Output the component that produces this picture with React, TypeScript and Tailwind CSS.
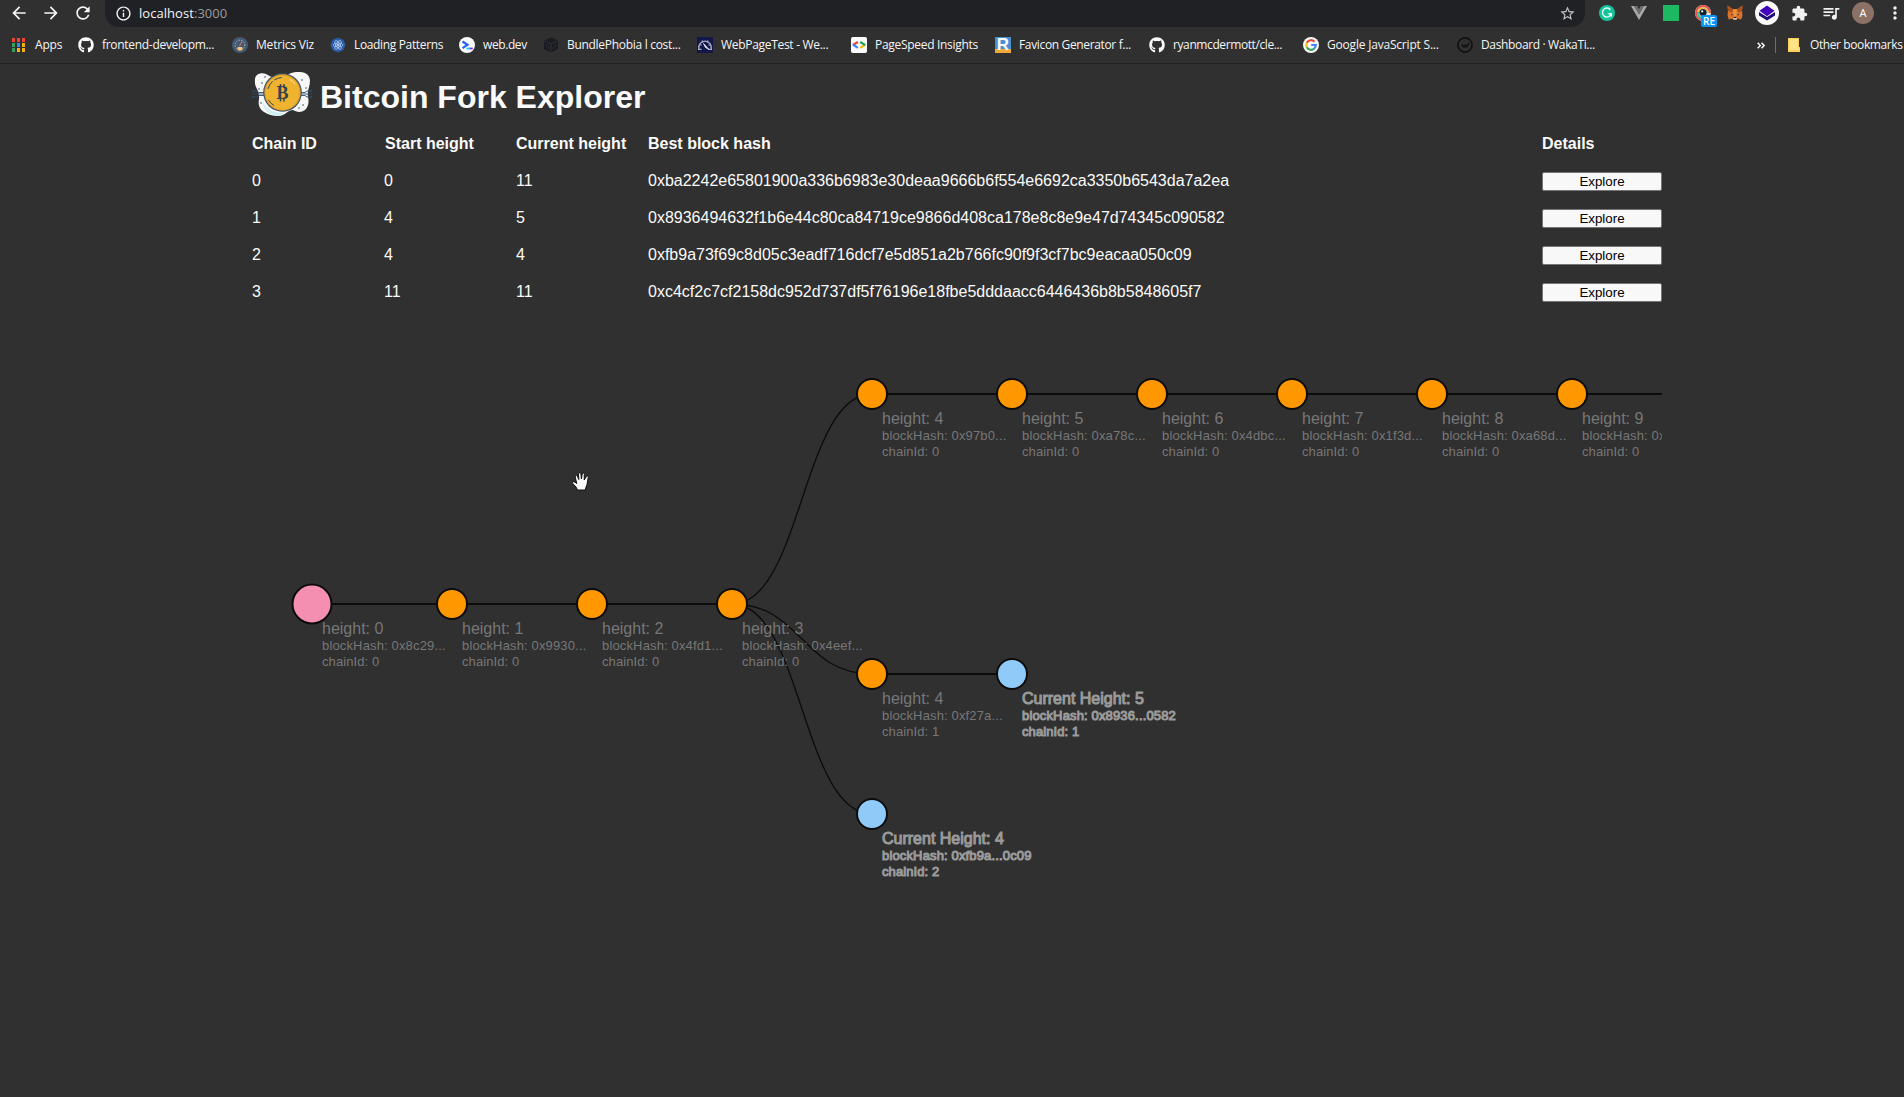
import React from "react";
import { FaGithub } from "react-icons/fa";
import {
  MdArrowBack,
  MdArrowForward,
  MdRefresh,
  MdInfoOutline,
  MdStarBorder,
  MdExtension,
  MdQueueMusic,
  MdMoreVert,
} from "react-icons/md";

const AppsIcon = () => (
  <svg width="16" height="16" viewBox="0 0 16 16" shapeRendering="crispEdges">
    {["#f44336", "#f44336", "#f44336", "#34a05a", "#2196f3", "#fbb016", "#34a05a", "#fbb016", "#fbb016"].map((c, i) => (
      <rect key={i} x={1 + (i % 3) * 5} y={1 + Math.floor(i / 3) * 5} width="3" height="4" fill={c} />
    ))}
  </svg>
);

const GithubIcon = () => <FaGithub size={16} color="#fafafa" />;

const MetricsIcon = () => (
  <svg width="16" height="16" viewBox="0 0 16 16">
    <circle cx="8" cy="8" r="8" fill="#455a71" />
    <circle cx="8" cy="8" r="4.800" fill="none" stroke="#c9d1d9" strokeWidth="1" strokeDasharray="1 1.600" />
    <path d="M7.500 9 10 4.500" stroke="#e57368" strokeWidth="1" />
    <rect x="5.500" y="10" width="5" height="3.400" rx="0.800" fill="#f6c37c" />
  </svg>
);

const ReactPatternsIcon = () => (
  <svg width="16" height="16" viewBox="0 0 16 16">
    <path d="M8 .5 13.500 3 15.500 8 13.500 13 8 15.500 2.500 13 .5 8 2.500 3z" fill="#2a5ba8" />
    <g fill="none" stroke="#a9c8f0" strokeWidth="0.8">
      <ellipse cx="8" cy="8" rx="5" ry="2" />
      <ellipse cx="8" cy="8" rx="5" ry="2" transform="rotate(60 8 8)" />
      <ellipse cx="8" cy="8" rx="5" ry="2" transform="rotate(120 8 8)" />
    </g>
    <circle cx="8" cy="8" r="1" fill="#dbe8fb" />
  </svg>
);

const WebDevIcon = () => (
  <svg width="16" height="16" viewBox="0 0 16 16">
    <circle cx="8" cy="8" r="8" fill="#fafafa" />
    <path d="M3.500 4.500 8.500 7.800 3.500 11.200" fill="none" stroke="#2563f5" strokeWidth="2.200" />
    <path d="M7.500 11.500h3" stroke="#14c8e0" strokeWidth="1.800" />
    <path d="M10.500 11.500h3.200" stroke="#7a2ff2" strokeWidth="1.800" />
  </svg>
);

const BundleIcon = () => (
  <svg width="16" height="16" viewBox="0 0 16 16">
    <path d="M8 .5 15 3.500V12L8 15.500 1 12V3.500z" fill="#1b1c22" />
    <path d="M1.500 4 8 7l6.500-3M8 7v8M3.500 7.500v2M12.500 7.500v2M5.500 10v2M10.500 10v2" fill="none" stroke="#34353c" strokeWidth="0.9" />
  </svg>
);

const WebPageTestIcon = () => (
  <svg width="16" height="16" viewBox="0 0 16 16">
    <rect width="16" height="16" fill="#15164a" />
    <path d="M1.900 12A6.300 6.300 0 1 1 14.100 12" fill="none" stroke="#aab1c4" strokeWidth="1.400" />
    <path d="M2.500 8h2.200M5 3.500l1 2M11 3.500l-1 2M13.500 8h-2.200M11.500 12.300h3.500M1 12.300h3.500" stroke="#aab1c4" strokeWidth="1.200" />
    <path d="M6.500 6.500 12 12.500 8.500 10.500z" fill="#e8eaf0" stroke="#e8eaf0" strokeWidth="0.8" />
  </svg>
);

const PageSpeedIcon = () => (
  <svg width="16" height="16" viewBox="0 0 16 16" fill="none" strokeWidth="2.100">
    <rect width="16" height="16" rx="1.800" fill="#fafafa" />
    <path d="M6.900 5 2 8" stroke="#ea4335" />
    <path d="M1.800 7.500 6.900 10.800" stroke="#4285f4" />
    <path d="M13.800 8 9.200 10.800" stroke="#fbbc05" />
    <path d="M9.200 5 14.300 8.200" stroke="#1d9f52" />
  </svg>
);

const FaviconIcon = () => (
  <span className="relative block h-4 w-4 overflow-hidden bg-[#4590d2]">
    <span className="absolute inset-x-0 bottom-0 h-1 bg-[#f2a93b]" />
    <span className="absolute inset-0 text-center font-['Liberation_Sans'] text-[17px] leading-4 font-bold text-[#fafafa]">R</span>
  </span>
);

const GoogleIcon = () => (
  <svg width="16" height="16" viewBox="0 0 16 16" fill="none" strokeWidth="2.200">
    <circle cx="8" cy="8" r="8" fill="#fafafa" />
    <path d="M11.500 4.700A4.800 4.800 0 0 0 3.800 5.700" stroke="#ea4335" />
    <path d="M3.800 5.700A4.800 4.800 0 0 0 3.800 10.300" stroke="#fbbc05" />
    <path d="M3.800 10.300A4.800 4.800 0 0 0 11.200 11.600" stroke="#34a853" />
    <path d="M11.200 11.600A4.800 4.800 0 0 0 12.800 8H8.200" stroke="#4285f4" />
  </svg>
);

const WakaIcon = () => (
  <svg width="16" height="16" viewBox="0 0 16 16" fill="none" stroke="#111">
    <circle cx="8" cy="8" r="7.100" strokeWidth="1.700" />
    <path d="M4.800 7.500 7 10l1.200-1.800L9.300 10l3-3.800" strokeWidth="1.500" />
  </svg>
);

type Bookmark = { label: string; icon: React.ReactNode; width: string; spacing: string };

const bookmarks: Bookmark[] = [
  { label: "Apps", icon: <AppsIcon />, width: "w-[67px]", spacing: "tracking-[-0.2px]" },
  { label: "frontend-developm...", icon: <GithubIcon />, width: "w-[154px]", spacing: "tracking-[-0.3px]" },
  { label: "Metrics Viz", icon: <MetricsIcon />, width: "w-[98px]", spacing: "tracking-[-0.2px]" },
  { label: "Loading Patterns", icon: <ReactPatternsIcon />, width: "w-[129px]", spacing: "tracking-[-0.35px]" },
  { label: "web.dev", icon: <WebDevIcon />, width: "w-[84px]", spacing: "tracking-[-0.4px]" },
  { label: "BundlePhobia l cost...", icon: <BundleIcon />, width: "w-[154px]", spacing: "tracking-[-0.3px]" },
  { label: "WebPageTest - We...", icon: <WebPageTestIcon />, width: "w-[154px]", spacing: "tracking-[-0.3px]" },
  { label: "PageSpeed Insights", icon: <PageSpeedIcon />, width: "w-[144px]", spacing: "tracking-[-0.3px]" },
  { label: "Favicon Generator f...", icon: <FaviconIcon />, width: "w-[154px]", spacing: "tracking-[-0.35px]" },
  { label: "ryanmcdermott/cle...", icon: <GithubIcon />, width: "w-[154px]", spacing: "tracking-[-0.4px]" },
  { label: "Google JavaScript S...", icon: <GoogleIcon />, width: "w-[154px]", spacing: "tracking-[-0.2px]" },
  { label: "Dashboard · WakaTi...", icon: <WakaIcon />, width: "w-[154px]", spacing: "tracking-[-0.35px]" },
];

const GrammarlyIcon = () => (
  <svg width="16" height="16" viewBox="0 0 16 16" fill="none">
    <circle cx="8" cy="8" r="8" fill="#15c39a" />
    <path d="M11.500 4.800A4.500 4.500 0 1 0 12.300 8.700H9.300M12.300 8.700V11.500" stroke="#e6fff8" strokeWidth="1.400" />
  </svg>
);

const VueIcon = () => (
  <svg width="16" height="14" viewBox="0 0 16 14">
    <path d="M0 0h3.200L8 8.300 12.800 0H16L8 14z" fill="#a8a8a8" />
    <path d="M3.200 0h3L8 3.200 9.800 0h3L8 8.300z" fill="#6f6f6f" />
  </svg>
);

const EyeIcon = () => (
  <span className="relative block h-4 w-4">
    <svg width="16" height="16" viewBox="0 0 16 16" fill="none" strokeWidth="2">
      <circle cx="8" cy="8" r="8" fill="#e9e4d8" />
      <path d="M1 8A7 7 0 0 1 15 8" stroke="#e2574c" />
      <path d="M3 8A5 5 0 0 1 13 8" stroke="#f3b13d" strokeWidth="1.500" />
      <path d="M1 8A7 7 0 0 0 6 14.700" stroke="#e2574c" />
      <path d="M3 7A5 5 0 0 0 7 13" stroke="#35b7a6" />
      <circle cx="8" cy="7.500" r="3.600" fill="#16222e" />
      <circle cx="7.200" cy="6.300" r="1.100" fill="#fff" />
    </svg>
    <span className="absolute top-[10px] left-[6px] h-3 w-4 rounded-[2px] bg-[#0a95f5] text-center font-['Open_Sans'] text-[10px] leading-3 font-semibold text-white">
      RE
    </span>
  </span>
);

const FoxIcon = () => (
  <svg width="16" height="16" viewBox="0 0 16 16">
    <path d="M.5.500 6 4.200h4L15.500.500 15 6l.5 4.500-1.300 4-3.700-1L9.500 15h-3l-1-1.500-3.700 1L.500 10.500 1 6z" fill="#d9722b" />
    <path d="M.5.500 6 4.200 5 7.500 1 6zM15.500.500 10 4.200l1 3.300L15 6z" fill="#a9521c" />
    <path d="M6 4.200h4L9.300 11H6.700z" fill="#f0913a" />
    <path d="M4 8.800 6 9.800 4.500 10.500zM12 8.800 10 9.800l1.500.7z" fill="#233447" />
    <path d="M6.500 12.500h3l.5 1.200-.8 1.100H6.800L6 13.700z" fill="#c7b8ae" />
    <path d="M6.800 12h2.400l.2 1H6.600z" fill="#222" />
  </svg>
);

const LayersIcon = () => (
  <svg width="24" height="24" viewBox="0 0 24 24">
    <circle cx="12" cy="12" r="12" fill="#fafafa" />
    <path d="M4 11 12 16l8-5v3.500L12 19.500l-8-5z" fill="#1d0f78" />
    <path d="M12 4.500 19.500 9.800 12 15.200 4.500 9.800z" fill="#4200b8" />
  </svg>
);

const extensions: React.ReactNode[] = [
  <GrammarlyIcon />,
  <VueIcon />,
  <span className="block h-4 w-4 bg-[#1db862]" />,
  <EyeIcon />,
  <FoxIcon />,
  <LayersIcon />,
  <MdExtension size={17} color="#f1f1f1" />,
  <MdQueueMusic size={20} color="#f1f1f1" />,
  <span className="flex h-[22px] w-[22px] items-center justify-center rounded-full bg-[#8c7266] font-['Open_Sans'] text-[11px] text-white">A</span>,
  <MdMoreVert size={20} color="#f1f1f1" />,
];

const BrowserChrome = () => (
  <header className="h-16 border-b border-[#222222] bg-[#303030] font-['Open_Sans',sans-serif] text-[#f5f5f5]">
    <div className="flex h-[27px] items-start">
      <div className="flex h-[26px] w-[105px] shrink-0 items-center text-[#f5f5f5]">
        <MdArrowBack size={20} className="ml-[9px]" />
        <MdArrowForward size={20} className="ml-3" />
        <MdRefresh size={20} className="ml-3" />
      </div>
      <div className="flex h-[27px] w-[1480px] shrink-0 items-center rounded-b-[14px] bg-[#202124] pr-[9px] pl-[10px]">
        <MdInfoOutline size={17} />
        <span className="ml-[7px] text-[13px] tracking-[0.05px]">
          localhost<span className="text-[#9a9a9a]">:3000</span>
        </span>
        <MdStarBorder size={17} color="#c4c4c4" className="ml-auto" />
      </div>
      <div className="ml-[6px] flex h-[26px] shrink-0 items-center">
        {extensions.map((icon, i) => (
          <div key={i} className="flex w-8 shrink-0 items-center justify-center">
            {icon}
          </div>
        ))}
      </div>
    </div>
    <nav className="flex h-9 items-center pl-[11px] text-[12px] whitespace-nowrap">
      {bookmarks.map((b) => (
        <div key={b.label} className={`flex shrink-0 items-center gap-2 ${b.width}`}>
          <span className="h-4 w-4 shrink-0">{b.icon}</span>
          <span className={b.spacing}>{b.label}</span>
        </div>
      ))}
      <div className="ml-[146px] flex items-center">
        <svg width="8" height="7" viewBox="0 0 8 7" fill="none" stroke="#f5f5f5" strokeWidth="1.500">
          <path d="M.7.700 3.300 3.500.7 6.300M4.500.7 7.100 3.500 4.500 6.300" />
        </svg>
        <span className="ml-[10px] h-4 w-px bg-[#6d6d6d]" />
        <svg width="12" height="14" viewBox="0 0 12 14" className="ml-3">
          <path d="M0 0h11v9h1v5H0z" fill="#ffcf55" />
          <path d="M1 1h9v9h1v2H1z" fill="#ffe389" />
        </svg>
        <span className="ml-[10px] tracking-[-0.4px]">Other bookmarks</span>
      </div>
    </nav>
  </header>
);

const BitcoinLogo = () => (
  <svg width="60" height="46" viewBox="0 0 60 46">
    <path
      d="M3 7C3.500 2 9 0 14 2c4 2 6 4 12 4s10-5 18-6c8-.6 14 2 14 9 0 6-3 9-2 16 1 4 1 9-3 13-4 3-9 2-12 0-4 0-6 3-10 5-5 2-13 1-19-3-5-3-6-8-5-13 .5-5-1-8-3-12-1-2-1.300-5-1-8z"
      fill="#f7f7f7"
    />
    <path d="M11 29c1 6 8 12 20 12l-3 3c-9 0-18-6-17-15z" fill="#cdeef3" />
    <g fill="none" stroke="#2f4d6b" strokeWidth="0.9">
      <path d="M1 19h4l2 1.500h5M0 22h12M1 25h4l2-1.500h5M59 19h-4l-2 1.500h-5M60 22H48M59 25h-4l-2-1.500h-5" />
    </g>
    <g fill="#2f4d6b">
      <circle cx="1" cy="19" r="1" />
      <circle cx="1" cy="25" r="1" />
      <circle cx="59" cy="19" r="1" />
      <circle cx="59" cy="25" r="1" />
      <circle cx="13" cy="5" r=".8" />
      <circle cx="7" cy="17" r=".8" />
      <circle cx="10" cy="11" r=".8" />
      <circle cx="9" cy="31" r=".8" />
      <circle cx="50" cy="8" r=".8" />
      <circle cx="54" cy="16" r=".8" />
      <circle cx="51" cy="33" r=".8" />
      <circle cx="47" cy="36" r=".8" />
    </g>
    <circle cx="30.500" cy="20.500" r="19.300" fill="#3b5266" />
    <circle cx="30.500" cy="20.500" r="18.200" fill="#d99a2b" />
    <circle cx="30.500" cy="20.500" r="17.200" fill="#efb32f" />
    <path d="M16 17A15 15 0 0 1 31 5.500" fill="none" stroke="#3b4a55" strokeWidth="1" strokeDasharray="9 2 8 2" />
    <path d="M16.500 28A15.500 15.500 0 0 0 22 33.500" fill="none" stroke="#3b4a55" strokeWidth="1" />
    <path d="M38 7.500A15 15 0 0 1 43 12" fill="none" stroke="#f9e3a8" strokeWidth="1" />
    <g stroke="#33444f" strokeWidth="1.500">
      <path d="M28.500 12v4M32 12v4M28.500 25.500v4M32 25.500v4" />
    </g>
    <text x="30.500" y="26.500" fontSize="18" fontWeight="bold" textAnchor="middle" fill="#33444f" className="font-['Liberation_Serif',serif]">
      B
    </text>
  </svg>
);

const chains = [
  { id: 0, start: 0, current: 11, hash: "0xba2242e65801900a336b6983e30deaa9666b6f554e6692ca3350b6543da7a2ea" },
  { id: 1, start: 4, current: 5, hash: "0x8936494632f1b6e44c80ca84719ce9866d408ca178e8c8e9e47d74345c090582" },
  { id: 2, start: 4, current: 4, hash: "0xfb9a73f69c8d05c3eadf716dcf7e5d851a2b766fc90f9f3cf7bc9eacaa050c09" },
  { id: 3, start: 11, current: 11, hash: "0xc4cf2c7cf2158dc952d737df5f76196e18fbe5dddaacc6446436b8b5848605f7" },
];

const ROW = "grid grid-cols-[120px_120px_120px_1fr_120px] gap-x-3 h-[37px] items-start leading-[18px]";

const ChainTable = () => (
  <section className="mt-[15px] text-[16px]">
    <div className={`${ROW} font-bold`}>
      <span>Chain ID</span>
      <span className="pl-px">Start height</span>
      <span>Current height</span>
      <span>Best block hash</span>
      <span>Details</span>
    </div>
    {chains.map((c) => (
      <div key={c.id} className={ROW}>
        <span>{c.id}</span>
        <span>{c.start}</span>
        <span>{c.current}</span>
        <span>{c.hash}</span>
        <button className="h-[19px] rounded-[2px] border border-[#767676] bg-[#f8f8f8] text-center text-[13.333px] leading-[17px] text-black">Explore</button>
      </div>
    ))}
  </section>
);

type BlockNode = { x: number; y: number; title: string; hash: string; chain: number; kind: "root" | "block" | "tip" };

const nodes: BlockNode[] = [
  { x: 60, y: 284, title: "height: 0", hash: "0x8c29...", chain: 0, kind: "root" },
  { x: 200, y: 284, title: "height: 1", hash: "0x9930...", chain: 0, kind: "block" },
  { x: 340, y: 284, title: "height: 2", hash: "0x4fd1...", chain: 0, kind: "block" },
  { x: 480, y: 284, title: "height: 3", hash: "0x4eef...", chain: 0, kind: "block" },
  { x: 620, y: 74, title: "height: 4", hash: "0x97b0...", chain: 0, kind: "block" },
  { x: 760, y: 74, title: "height: 5", hash: "0xa78c...", chain: 0, kind: "block" },
  { x: 900, y: 74, title: "height: 6", hash: "0x4dbc...", chain: 0, kind: "block" },
  { x: 1040, y: 74, title: "height: 7", hash: "0x1f3d...", chain: 0, kind: "block" },
  { x: 1180, y: 74, title: "height: 8", hash: "0xa68d...", chain: 0, kind: "block" },
  { x: 1320, y: 74, title: "height: 9", hash: "0x", chain: 0, kind: "block" },
  { x: 620, y: 354, title: "height: 4", hash: "0xf27a...", chain: 1, kind: "block" },
  { x: 760, y: 354, title: "Current Height: 5", hash: "0x8936...0582", chain: 1, kind: "tip" },
  { x: 620, y: 494, title: "Current Height: 4", hash: "0xfb9a...0c09", chain: 2, kind: "tip" },
];

const links: [number, number, number, number][] = [
  [60, 284, 200, 284],
  [200, 284, 340, 284],
  [340, 284, 480, 284],
  [480, 284, 620, 74],
  [480, 284, 620, 354],
  [480, 284, 620, 494],
  [620, 74, 760, 74],
  [760, 74, 900, 74],
  [900, 74, 1040, 74],
  [1040, 74, 1180, 74],
  [1180, 74, 1320, 74],
  [1320, 74, 1460, 74],
  [620, 354, 760, 354],
];

const nodeFill = { root: "#f48fb1", block: "#ff9800", tip: "#90caf9" };

const ForkTree = () => (
  <svg width="1410" height="776" className="block overflow-hidden font-['Liberation_Sans',Arial,sans-serif]">
    {links.map(([x1, y1, x2, y2], i) => {
      const mid = (x1 + x2) / 2;
      return (
        <path
          key={i}
          d={`M${x1},${y1}C${mid},${y1} ${mid},${y2} ${x2},${y2}`}
          fill="none"
          stroke="#0c0c0c"
          strokeWidth={y1 === y2 ? 2 : 1.3}
        />
      );
    })}
    {nodes.map((n) => {
      const tip = n.kind === "tip";
      const text = {
        fill: tip ? "#9a9a9a" : "#777777",
        stroke: tip ? "#9a9a9a" : "none",
        strokeWidth: tip ? 1 : 0,
      };
      return (
        <g key={`${n.x}-${n.y}`} transform={`translate(${n.x},${n.y})`}>
          <circle r={n.kind === "root" ? 19.5 : 15} fill={nodeFill[n.kind]} stroke="#0c0c0c" strokeWidth="2" />
          <text x="10" y="30" fontSize="16" {...text}>{n.title}</text>
          <text x="10" y="46" fontSize="13" className="tracking-[0.15px]" {...text}>{`blockHash: ${n.hash}`}</text>
          <text x="10" y="62" fontSize="13" className="tracking-[0.1px]" {...text}>{`chainId: ${n.chain}`}</text>
        </g>
      );
    })}
  </svg>
);

const HandCursor = () => (
  <svg width="18" height="19" viewBox="0 0 18 19" className="pointer-events-none absolute top-[472px] left-[572px]">
    <path
      d="M5.500 18 4 15 .8 11.500C-.2 9.800 1.800 9 3 10.200L4.800 11.500 3.200 5C2.800 3 4.800 2.600 5.300 4.200L6.800 7.500 6.500 2C6.500.300 8.600.200 8.900 1.800L9.400 7l.8-5c.3-1.500 2.200-1.200 2.100.3L12.200 8 14.200 4.800c.7-1.300 2.300-.7 2 .8L15 12.500 13 18z"
      fill="#fafafa"
      stroke="#101010"
      strokeWidth="1"
    />
  </svg>
);

export default function App() {
  return (
    <div className="relative h-[1097px] w-[1904px] overflow-hidden bg-[#303030] font-['Liberation_Sans',Arial,sans-serif] text-[#fafafa]">
      <BrowserChrome />
      <main className="ml-[252px] w-[1410px]">
        <div className="flex h-[56px] items-start pt-2">
          <BitcoinLogo />
          <h1 className="ml-2 pt-[7px] text-[32px] leading-[37px] font-bold whitespace-nowrap">Bitcoin Fork Explorer</h1>
        </div>
        <ChainTable />
        <ForkTree />
      </main>
      <HandCursor />
    </div>
  );
}
